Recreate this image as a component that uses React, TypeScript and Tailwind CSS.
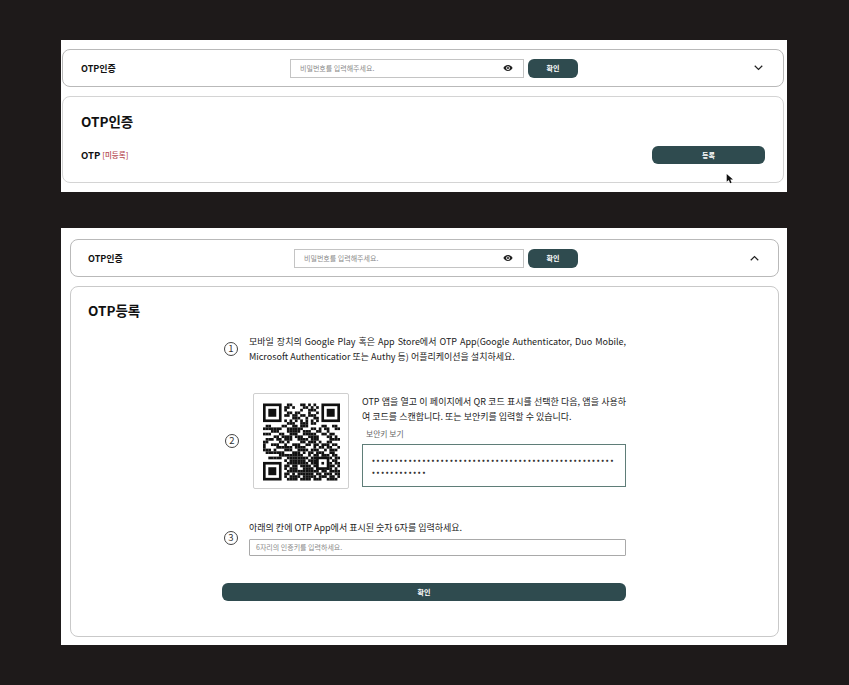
import React from "react";

const DATA = [
"00000000011000110101000000000",
"00000000110100011010100000000",
"00000000100000100111000000000",
"00000000011011000100100000000",
"00000000110110110111000000000",
"00000000000111001001100000000",
"00000000101010101010100000000",
"00000000011100111011000000000",
"01100001100110111000001100110",
"11111110011111100011010110011",
"00011100011111011100110010000",
"11100011001110011111001101100",
"00001101111011100111100011010",
"01110110111001111011100001111",
"11000011010000110111010011000",
"10011100100111001101101110110",
"10000111111011110001011011001",
"11101000111001111011100101110",
"01111111000111010110111001100",
"00000011111111100101101110110",
"00111110011111111011101101011",
"00000000101111110111111100110",
"00000000011111111011111111011",
"00000000110110111101111111101",
"00000000101110011110111011010",
"00000000011111111111101101111",
"00000000110101111110110111011",
"00000000101111011111011101101",
"00000000011110111101110011110",
];

function QrCode() {
  const cells: React.ReactNode[] = [];
  DATA.forEach((row, y) => {
    for (let x = 0; x < 29; x++) {
      if (row[x] === "1") cells.push(<rect key={x + "-" + y} x={x} y={y} width="1.02" height="1.02" />);
    }
  });
  const finder = (x: number, y: number) => (
    <g key={x + "f" + y}>
      <rect x={x} y={y} width="7" height="7" />
      <rect x={x + 1} y={y + 1} width="5" height="5" fill="#fff" />
      <rect x={x + 2} y={y + 2} width="3" height="3" />
    </g>
  );
  return (
    <svg viewBox="0 0 29 29" className="w-[77px] h-[78px]" fill="#111">
      {cells}
      {finder(0, 0)}
      {finder(22, 0)}
      {finder(0, 22)}
      <rect x="20" y="20" width="5" height="5" />
      <rect x="21" y="21" width="3" height="3" fill="#fff" />
      <rect x="22" y="22" width="1" height="1" />
    </svg>
  );
}

function Eye() {
  return (
    <svg viewBox="0 0 24 24" className="w-[10px] h-[10px]" fill="#222">
      <path d="M12 5C6.500 5 2.500 8.600 1 12c1.500 3.400 5.500 7 11 7s9.500-3.600 11-7c-1.500-3.400-5.500-7-11-7zm0 11.500a4.500 4.500 0 1 1 0-9 4.500 4.500 0 0 1 0 9zm0-7a2.500 2.500 0 1 0 0 5 2.500 2.500 0 0 0 0-5z" />
    </svg>
  );
}

function Chevron({ up }: { up?: boolean }) {
  return (
    <svg viewBox="0 0 12 8" className="w-[9px] h-[6px]" fill="none" stroke="#222" strokeWidth="1.6">
      <path d={up ? "M1 7l5-5 5 5" : "M1 1l5 5 5-5"} />
    </svg>
  );
}

function Circled({ n, className }: { n: string; className: string }) {
  return (
    <span className={`w-[14px] h-[14px] shrink-0 rounded-full border border-[#444] flex items-center justify-center text-[9.5px] leading-none text-[#333] ${className}`}>
      {n}
    </span>
  );
}

function Header({ up, panel }: { up?: boolean; panel: "a" | "b" }) {
  const a = panel === "a";
  return (
    <div className={`h-[38px] border border-[#b9b9b9] rounded-[8px] flex items-center ${a ? "w-[722px] pl-[18px]" : "w-[709px] pl-[17px]"}`}>
      <span className={`pt-[1px] text-[9px] font-bold text-[#111] ${a ? "w-[209px]" : "w-[206px]"}`}>OTP인증</span>
      <div className={`h-[19px] border border-[#c4c4c4] flex items-center justify-between pl-[9px] pr-[10px] ${a ? "w-[234px]" : "w-[230px]"}`}>
        <span className="text-[7px] text-[#8a8a8a]">비밀번호를 입력해주세요.</span>
        <Eye />
      </div>
      <button className="ml-[4px] w-[50px] h-[19px] rounded-[6px] bg-[#2f4b4f] text-white text-[7px] font-bold flex items-center justify-center">확인</button>
      <span className={`ml-auto flex ${a ? "mr-[20px]" : "mr-[19px]"}`}><Chevron up={up} /></span>
    </div>
  );
}

export default function App() {
  return (
    <div className="w-[849px] h-[685px] bg-[#1e1a1a] pt-[40px] pl-[61px] overflow-hidden font-['Noto_Sans_CJK_KR','Noto_Sans',sans-serif]">
      <div className="relative w-[726px] h-[152px] bg-white pt-[9px] pl-[1px]">
        <Header panel="a" />
        <div className="mt-[9px] w-[722px] h-[87px] border border-[#d4d4d4] rounded-[8px] pl-[18px] pt-[13px]">
          <div className="text-[13.5px] leading-[22px] font-bold text-[#111]">OTP인증</div>
          <div className="mt-[14px] flex items-center h-[18px]">
            <span className="text-[9.5px] font-bold text-[#111]">OTP</span>
            <span className="ml-[2px] text-[7.5px] font-medium text-[#b5494f]">[미등록]</span>
            <button className="ml-auto mr-[18px] w-[113px] h-[18px] rounded-[6px] bg-[#2f4b4f] text-white text-[7px] font-bold">등록</button>
          </div>
        </div>
        <svg viewBox="0 0 10 14" className="absolute left-[665px] top-[134px] w-[7px] h-[10px]" fill="#111">
          <path d="M1 0v11l3-2.500 2 4.500 2-1-2-4.300h4z" />
        </svg>
      </div>

      <div className="relative mt-[36px] w-[726px] h-[417px] bg-white pt-[11px] pl-[9px]">
        <Header up panel="b" />
        <div className="mt-[9px] w-[709px] h-[351px] border border-[#c9c9c9] rounded-[8px] pl-[17px] pt-[12px] text-[#222]">
          <div className="text-[13.5px] leading-[22px] font-bold text-[#111]">OTP등록</div>

          <div className="ml-[134px] w-[404px] mt-[14px]">
            <div className="flex items-center pl-[2px]">
              <Circled n="1" className="mb-[2px]" />
              <p className="ml-[11px] w-[377px] text-[9px] leading-[14.5px] text-justify text-[#222]">
                모바일 장치의 Google Play 혹은 App Store에서 OTP App(Google Authenticator, Duo Mobile, Microsoft Authenticatior 또는 Authy 등) 어플리케이션을 설치하세요.
              </p>
            </div>

            <div className="flex items-center mt-[29px] pl-[3px]">
              <Circled n="2" className="" />
              <div className="ml-[14px] w-[96px] h-[96px] shrink-0 border border-[#cfcfcf] rounded-[2px] flex items-center justify-center pt-[2px]">
                <QrCode />
              </div>
              <div className="ml-[13px] w-[264px]">
                <p className="text-[9px] leading-[14.5px] text-justify">
                  OTP 앱을 열고 이 페이지에서 QR 코드 표시를 선택한 다음, 앱을 사용하여 코드를 스캔합니다. 또는 보안키를 입력할 수 있습니다.
                </p>
                <div className="mt-[4px] pl-[4px] text-[7.8px] leading-[12px] text-[#666]">보안키 보기</div>
                <div className="mt-[4px] h-[43px] border border-[#5f7d78] pl-[9px] pr-[10px] pt-[9px] text-[7.5px] leading-[12px] font-bold tracking-[1.75px] text-[#333] break-all">
                  •••••••••••••••••••••••••••••••••••••••••••••••••••••••••••••••••
                </div>
              </div>
            </div>

            <div className="flex items-center mt-[32px] pl-[2px]">
              <Circled n="3" className="mb-[1px]" />
              <div className="ml-[11px] w-[377px]">
                <p className="text-[9px] leading-[14px]">아래의 칸에 OTP App에서 표시된 숫자 6자를 입력하세요.</p>
                <div className="mt-[4px] h-[17px] border border-[#a9a9a9] rounded-[1px] pl-[6px] flex items-center text-[7px] text-[#8a8a8a]">6자리의 인증키를 입력하세요.</div>
              </div>
            </div>

            <button className="mt-[27px] w-[404px] h-[18px] rounded-[6px] bg-[#2f4b4f] text-white text-[7px] font-bold">확인</button>
          </div>
        </div>
        <svg viewBox="0 0 6 12" className="absolute left-[466px] top-[168px] w-[4px] h-[10px]" fill="none" stroke="#666" strokeWidth="1">
          <path d="M1 1h4M3 1v10M1 11h4" />
        </svg>
      </div>
    </div>
  );
}
